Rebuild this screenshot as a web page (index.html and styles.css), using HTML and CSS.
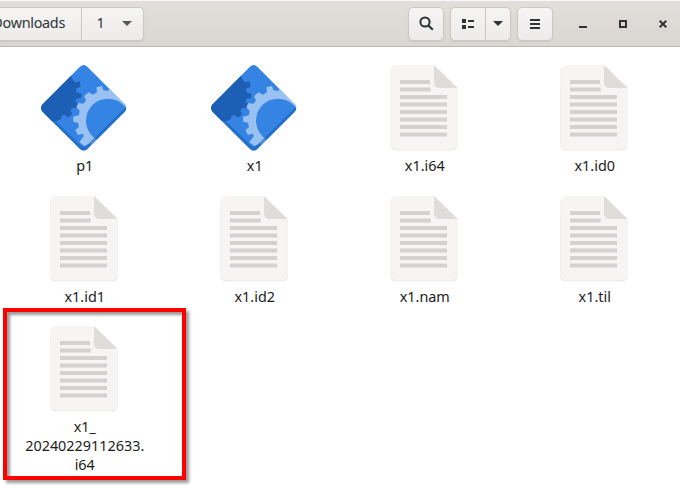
FILE: index.html
```
<!DOCTYPE html>
<html lang="en">
<head>
<meta charset="utf-8">
<title>Files</title>
<link rel="stylesheet" href="styles.css">
</head>
<body>
<svg class="defs" aria-hidden="true">
  <defs>
    <clipPath id="diamond"><path d="M150 31Q161 21 172 31L284 144Q294 155 284 166L172 278Q161 288 150 278L38 166Q28 155 38 144Z"/></clipPath>
    <symbol id="program" viewBox="33 26 258 258">
      <g clip-path="url(#diamond)">
        <path fill="#3584e4" d="M30 20H294V288H30Z"/>
        <path fill="#1c5fb4" d="M20 20H110L126 66L134 78L149 75L152 91L138 97L139 108L154 112L153 126L139 127L137 137L146 143L140 156L128 154L121 163L127 173L115 184L104 176L94 178L93 188L80 194L20 194Z"/>
        <path fill="#99c1f1" d="M294 144L270 112L237 99L234 104L220 102L216 89L199 93L201 107L189 115L176 108L162 119L168 133L160 142L145 140L139 153L149 163L147 177L129 181L130 196L144 199L147 212L136 222L144 236L157 232L162 238L148 258L164 269L180 261L188 270L294 170Z"/>
        <circle cx="234" cy="193" r="66" fill="#3584e4"/>
        <path fill="#155eb5" fill-opacity=".55" d="M28 145L150 265Q161 276 172 265L294 145V290H28Z"/>
      </g>
    </symbol>
    <symbol id="document" viewBox="30 26 204 258">
      <path fill="#deddda" d="M50 28H162L233 97V263Q233 282 214 282H50Q31 282 31 263V46Q31 28 50 28Z"/>
      <path fill="#f6f5f4" d="M50 26H162L233 95V261Q233 280 214 280H50Q31 280 31 261V45Q31 26 50 26Z"/>
      <path fill="#deddda" d="M162 26L233 95H180Q162 95 162 77Z"/>
      <path fill="none" stroke="#d3d2cf" stroke-width="12" d="M60 77H150M60 99.5H152M60 122H201M60 144.5H201M60 167H201M60 189.5H201M60 212H201M60 234.5H201"/>
    </symbol>
  </defs>
</svg>
<header class="headerbar">
  <nav class="group pathbar">
    <div class="button crumb"><span>Downloads</span></div>
    <div class="button current"><span>1</span><svg width="10" height="5"><path d="M0 0H10L5 5Z"/></svg></div>
  </nav>
  <div class="tools">
    <div class="group"><div class="button tool"><svg width="16" height="16"><circle cx="7" cy="6" r="4.6" fill="none" stroke="#2e3436" stroke-width="2"/><path d="M10.2 9.2L14.8 13.8" fill="none" stroke="#2e3436" stroke-width="2.2"/></svg></div></div>
    <div class="group"><div class="button tool"><svg width="16" height="16"><path d="M2 3H6V7H2ZM2 9H6V13H2ZM8 4H14V6H8ZM8 10H14V12H8Z"/></svg></div><div class="button drop"><svg width="10" height="5"><path d="M0 0H10L5 5Z"/></svg></div></div>
    <div class="group"><div class="button tool"><svg width="16" height="16"><path d="M3 3H13V5H3ZM3 7H13V9H3ZM3 11H13V13H3Z"/></svg></div></div>
  </div>
  <div class="controls">
    <svg width="8" height="8"><path d="M0 6H8V8H0Z"/></svg>
    <svg width="8" height="8"><path fill-rule="evenodd" d="M0 0H8V8H0ZM2 2V6H6V2Z"/></svg>
    <svg width="8" height="8"><path d="M.7 .7L7.3 7.3M7.3 .7L.7 7.3" fill="none" stroke="#2e3436" stroke-width="2"/></svg>
  </div>
</header>
<main class="files">
  <div class="file"><svg class="program"><use href="#program"/></svg><span>p1</span></div>
  <div class="file"><svg class="program"><use href="#program"/></svg><span>x1</span></div>
  <div class="file"><svg class="document"><use href="#document"/></svg><span>x1.i64</span></div>
  <div class="file"><svg class="document"><use href="#document"/></svg><span>x1.id0</span></div>
  <div class="file"><svg class="document"><use href="#document"/></svg><span>x1.id1</span></div>
  <div class="file"><svg class="document"><use href="#document"/></svg><span>x1.id2</span></div>
  <div class="file"><svg class="document"><use href="#document"/></svg><span>x1.nam</span></div>
  <div class="file"><svg class="document"><use href="#document"/></svg><span>x1.til</span></div>
  <div class="file"><svg class="document"><use href="#document"/></svg><span>x1_<br>20240229112633.<br>i64</span></div>
</main>
<div class="highlight"></div>
</body>
</html>
```
FILE: styles.css
```
* { box-sizing: border-box; }
body {
  margin: 0;
  width: 680px;
  height: 490px;
  overflow: hidden;
  position: relative;
  background: #fff;
  color: #1c1c1c;
  font: 14.4px/19px "Noto Sans", sans-serif;
}
svg { display: block; flex: none; fill: #2e3436; }
.defs { position: absolute; width: 0; height: 0; }
.headerbar {
  display: flex;
  align-items: center;
  height: 47px;
  padding-right: 13px;
  background: linear-gradient(#e1dedb, #dad6d2);
  border-top: 1px solid #f9f8f8;
  border-bottom: 1px solid #bfb8b1;
}
.group {
  display: flex;
  height: 34px;
  border: 1px solid #cdc7c2;
  border-radius: 5px;
  background: linear-gradient(#f6f5f4, #edebe9);
  box-shadow: 0 1px 2px rgba(0, 0, 0, .07);
}
.button { display: flex; align-items: center; justify-content: center; }
.button + .button { border-left: 1px solid #cdc7c2; }
.pathbar { width: 144px; border-left: 0; border-radius: 0 5px 5px 0; color: #2e3436; }
.crumb { width: 81px; justify-content: flex-end; padding-right: 16px; letter-spacing: -.3px; }
.crumb span, .current span { margin-top: -2px; }
.current { flex: 1; gap: 17px; padding-left: 3px; }
.current svg { fill: #555a5b; }
.tools { display: flex; gap: 6px; margin-left: 264px; }
.tool { width: 34px; }
.drop { width: 25px; }
.controls { display: flex; flex: 1; justify-content: space-between; margin-left: 26px; }
.files {
  display: grid;
  grid-template-columns: repeat(4, 170px);
  grid-template-rows: 131px 130px 165px;
  margin: 18px 0 0 -1px;
}
.file { display: flex; flex-direction: column; align-items: center; text-align: center; }
.file span { margin: 5px 0 0 1.5px; }
.program { width: 86px; height: 86px; margin-top: -.4px; }
.document { width: 68px; height: 86px; margin-top: -.4px; }
.highlight {
  position: absolute;
  left: 3px;
  top: 308px;
  width: 183px;
  height: 172px;
  border: 4px solid #f00;
  box-shadow: 3px 3px 3px rgba(0, 0, 0, .4), inset 3px 3px 3px rgba(0, 0, 0, .4);
}
```
